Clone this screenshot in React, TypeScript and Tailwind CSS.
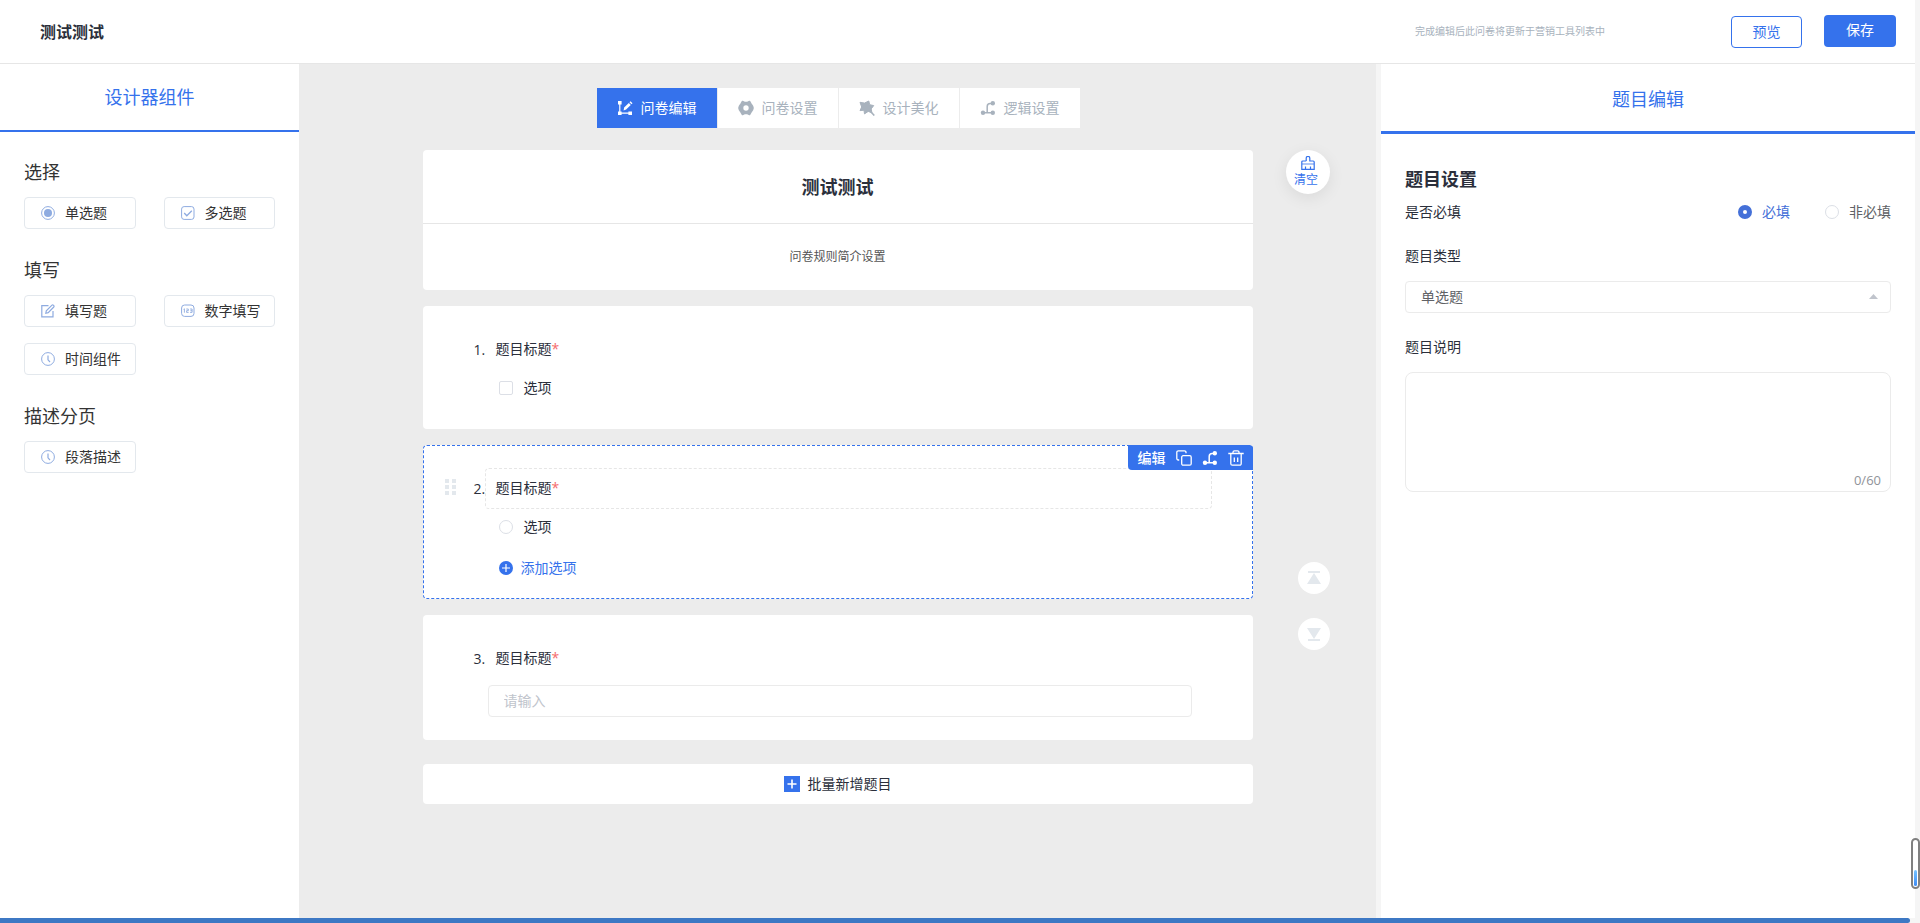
import React, { useState } from 'react';

const BranchIcon = ({ className = '' }) => (
  <svg className={className} width="16" height="16" viewBox="0 0 16 16" fill="currentColor">
    <circle cx="3" cy="12.8" r="2.2" />
    <circle cx="12.8" cy="12.8" r="2.2" />
    <circle cx="12.8" cy="3.2" r="2.2" />
    <path d="M3 12.8h10M7.2 12.8V6.4a3 3 0 0 1 3-3H13" fill="none" stroke="currentColor" strokeWidth="1.5" />
  </svg>
);

const EditTabIcon = () => (
  <svg width="16" height="16" viewBox="0 0 16 16" fill="currentColor">
    <path d="M1 1h3.600v3.600H1zM1 11.400h3.600V15H1zM11.400 11.400H15V15h-3.600z" />
    <path d="M2.800 3v10.200H13" fill="none" stroke="currentColor" strokeWidth="1.200" />
    <path d="M6.600 10.400l.5-2.800 4.700-4.700 2 2-4.700 4.700zM12.500 2.200l1-1 2 2-1 1z" />
  </svg>
);

const GearIcon = () => (
  <svg width="16" height="16" viewBox="0 0 16 16">
    <path
      d="M4.500 1.500l2 1h3l2-1 1.300 2.200L14.500 6.200 15 8l-.5 1.800-1.700 2.500-1.300 2.200-2-1h-3l-2 1-1.300-2.200L1.500 9.800 1 8l.5-1.800 1.700-2.500z"
      fill="currentColor"
      stroke="currentColor"
      strokeWidth="1.600"
      strokeLinejoin="round"
    />
    <circle cx="8" cy="8" r="2.700" fill="#fff" />
  </svg>
);

const WandIcon = () => (
  <svg width="16" height="16" viewBox="0 0 16 16">
    <path
      d="M9.800 1l.9 3.700 4 .9-2.500 3.300.7 3.900-3.700-1.400-3.700 2.500-.5-3.700L1 10.600 2.700 7 1 2.300l4.500.8z"
      fill="currentColor"
      stroke="currentColor"
      strokeWidth="1"
      strokeLinejoin="round"
    />
    <path d="M11.800 11.800l3.500 3.700" fill="none" stroke="currentColor" strokeWidth="1.600" />
  </svg>
);

const RadioIcon = () => (
  <svg width="14" height="14" viewBox="0 0 14 14">
    <circle cx="7" cy="7" r="6.400" fill="none" stroke="currentColor" />
    <circle cx="7" cy="7" r="4" fill="currentColor" />
  </svg>
);

const CheckIcon = () => (
  <svg width="14" height="14" viewBox="0 0 14 14" fill="none" stroke="currentColor">
    <rect x=".6" y=".6" width="12.400" height="12.800" rx="2.500" />
    <path d="M3.200 7l2.600 2.800 5-5" strokeWidth="1.300" />
  </svg>
);

const PenIcon = () => (
  <svg width="14" height="14" viewBox="0 0 14 14" fill="none" stroke="currentColor" strokeWidth="1.200">
    <path d="M7.500 1.700H.8v11.200H12V7" />
    <path d="M4.800 9.300l.5-2.400L11 1.200a.9.9 0 0 1 1.300 0l.5.500a.9.9 0 0 1 0 1.300L7.200 8.700z" />
  </svg>
);

const NumberIcon = () => (
  <svg width="14" height="14" viewBox="0 0 14 14" fill="none" stroke="currentColor">
    <rect x=".6" y="1" width="12.400" height="11.400" rx="3" />
    <path d="M2.600 5.300l.8-.5v3.900M5.300 5h2v1.700H5.600v1.700h2M9.100 5h2v3.400h-2M9.400 6.700h1.700" strokeWidth=".9" />
  </svg>
);

const ClockIcon = () => (
  <svg width="14" height="14" viewBox="0 0 14 14" fill="none" stroke="currentColor">
    <circle cx="7" cy="7" r="6.400" />
    <path d="M7 3.500V7.800l2 2.200" strokeWidth="1.200" />
  </svg>
);

const CopyIcon = () => (
  <svg width="16" height="16" viewBox="0 0 16 16" fill="none" stroke="currentColor" strokeWidth="1.300">
    <path d="M3.200 10H2.300A1.500 1.500 0 0 1 .8 8.500V2.300A1.500 1.500 0 0 1 2.300.8h6.200A1.500 1.500 0 0 1 10 2.300v.9" />
    <rect x="5.700" y="5.700" width="9.500" height="9.500" rx="1.500" />
  </svg>
);

const TrashIcon = () => (
  <svg width="16" height="16" viewBox="0 0 16 16" fill="none" stroke="currentColor" strokeWidth="1.300">
    <path d="M.3 3.500h15.400M5 3.300V2.200A1.400 1.400 0 0 1 6.400.8h3.200A1.400 1.400 0 0 1 11 2.200v1.100M2.800 3.500v10.200a1.500 1.500 0 0 0 1.500 1.500h7.400a1.500 1.500 0 0 0 1.500-1.500V3.500M6.300 7.500V12M9.700 7.500V12" />
  </svg>
);

const BrushIcon = () => (
  <svg width="14" height="14" viewBox="0 0 14 14" fill="none" stroke="currentColor" strokeWidth="1.200">
    <path d="M5.200 5V2.200a1.800 1.800 0 0 1 3.600 0V5h3.400a1 1 0 0 1 1 1v7.400H.8V6a1 1 0 0 1 1-1h3.400" />
    <path d="M1 8h12" strokeWidth="1.600" opacity=".5" />
    <path d="M4.500 13v-2.500M9.500 13v-2.500" />
  </svg>
);

const groups = [
  {
    title: '选择',
    items: [
      { name: '单选题', icon: RadioIcon },
      { name: '多选题', icon: CheckIcon },
    ],
  },
  {
    title: '填写',
    items: [
      { name: '填写题', icon: PenIcon },
      { name: '数字填写', icon: NumberIcon },
      { name: '时间组件', icon: ClockIcon },
    ],
  },
  {
    title: '描述分页',
    items: [{ name: '段落描述', icon: ClockIcon }],
  },
];

const tabs = [
  { name: '问卷编辑', icon: EditTabIcon },
  { name: '问卷设置', icon: GearIcon },
  { name: '设计美化', icon: WandIcon },
  { name: '逻辑设置', icon: BranchIcon },
];

const Header = () => (
  <header className="flex h-16 shrink-0 items-center border-b border-[#e6e6e6] pl-10 pr-[19px]">
    <h1 className="flex-1 text-base font-bold text-[#2b2f3b]">测试测试</h1>
    <p className="mr-[126px] text-[10px] text-[#a8b2bd]">完成编辑后此问卷将更新于营销工具列表中</p>
    <button className="mr-[22px] h-8 w-[71px] rounded border border-[#3572ec] text-sm text-[#3572ec]">预览</button>
    <button className="mb-0.5 h-8 w-[72px] rounded bg-[#3572ec] pb-0.5 text-sm text-white">保存</button>
  </header>
);

const ComponentPanel = () => (
  <aside className="w-[299px] shrink-0 bg-white">
    <h2 className="border-b-2 border-[#3572ec] text-center text-lg leading-[66px] text-[#3572ec]">设计器组件</h2>
    <div className="flex flex-col gap-7 px-6 pt-[27px]">
      {groups.map((group) => (
        <section key={group.title}>
          <h3 className="mb-3 text-lg leading-[26px] text-[#333]">{group.title}</h3>
          <div className="grid grid-cols-2 gap-x-7 gap-y-4">
            {group.items.map((item) => (
              <button
                key={item.name}
                className="flex h-8 items-center gap-2.5 rounded border border-[#e3e8ed] pl-4 text-sm text-[#333]"
              >
                <span className="text-[#8eabe0]">
                  <item.icon />
                </span>
                {item.name}
              </button>
            ))}
          </div>
        </section>
      ))}
    </div>
  </aside>
);

const QuestionCard = ({ index, active = false, className = '', children }: any) => (
  <section
    className={`relative flex rounded border bg-white pl-[21px] pr-10 pt-[22px] text-sm text-[#2b2f3b] ${
      active ? 'border-dashed border-[#3572ec]' : 'border-transparent'
    } ${className}`}
  >
    <div className="w-[29px] shrink-0 pt-[11px]">
      {active && (
        <div className="grid w-[11px] grid-cols-2 gap-x-[3px] gap-y-0.5">
          {[1, 2, 3, 4, 5, 6].map((dot) => (
            <span key={dot} className="size-1 bg-[#e3e8ed]" />
          ))}
        </div>
      )}
    </div>
    <div className="flex-1">
      <div className="flex items-center">
        <span className="w-[11px] whitespace-nowrap">{index}.</span>
        <h3
          className={`h-[41px] flex-1 rounded border px-2.5 leading-[38px] ${
            active ? 'border-dashed border-[#e6e6e6]' : 'border-transparent'
          }`}
        >
          题目标题<span className="text-[#f56c6c]">*</span>
        </h3>
      </div>
      {children}
    </div>
    {active && (
      <div className="absolute -right-px -top-px flex h-[25px] items-center gap-2.5 rounded-bl rounded-tr bg-[#3572ec] pl-2.5 pr-[9px] text-white">
        <button className="font-medium leading-5">编辑</button>
        <button aria-label="复制">
          <CopyIcon />
        </button>
        <button aria-label="逻辑">
          <BranchIcon />
        </button>
        <button aria-label="删除">
          <TrashIcon />
        </button>
      </div>
    )}
  </section>
);

const Designer = () => {
  const [tab, setTab] = useState('问卷编辑');

  return (
    <main className="grid flex-1 grid-cols-[1fr_830px_1fr] bg-[#ececec] pt-6">
      <div />
      <div>
        <nav className="flex justify-center gap-px pl-px">
          {tabs.map((item) => (
            <button
              key={item.name}
              onClick={() => setTab(item.name)}
              className={`flex h-10 w-[120px] items-center justify-center gap-2 text-sm ${
                tab === item.name ? 'bg-[#3572ec] text-white' : 'bg-white text-[#a8b2bd]'
              }`}
            >
              <item.icon />
              {item.name}
            </button>
          ))}
        </nav>

        <div className="mt-[22px] flex flex-col gap-4">
          <section className="rounded bg-white text-center">
            <h2 className="border-b border-[#e6e6e6] pt-0.5 text-lg font-bold leading-[71px] text-[#2b2f3b]">
              测试测试
            </h2>
            <p className="text-xs leading-[66px] text-[#555]">问卷规则简介设置</p>
          </section>

          <QuestionCard index={1} className="pb-[29px]">
            <label className="ml-[25px] mt-[7px] flex h-[22px] items-center gap-[11px]">
              <input type="checkbox" className="size-3.5 appearance-none rounded-xs border border-[#dcdfe6] bg-white" />
              选项
            </label>
          </QuestionCard>

          <QuestionCard index={2} active className="pb-[19px]">
            <label className="ml-[25px] mt-[7px] flex h-[22px] items-center gap-[11px]">
              <input type="radio" className="size-3.5 appearance-none rounded-full border border-[#dcdfe6] bg-white" />
              选项
            </label>
            <button className="ml-[25px] mt-[19px] flex h-[22px] items-center gap-2 text-[#3572ec]">
              <svg width="14" height="14" viewBox="0 0 14 14">
                <circle cx="7" cy="7" r="7" fill="currentColor" />
                <path d="M7 3v8M3 7h8" stroke="#fff" strokeWidth="1.200" />
              </svg>
              添加选项
            </button>
          </QuestionCard>

          <QuestionCard index={3} className="pb-[22px]">
            <div className="ml-3.5 mr-5 mt-1.5">
              <input
                type="text"
                aria-label="题目标题"
                placeholder="请输入"
                className="block h-8 w-full rounded border border-[#ebebeb] px-[15px] pb-px placeholder:text-[#c0c4cc] focus:outline-none"
              />
            </div>
          </QuestionCard>
        </div>

        <button className="mt-6 flex h-10 w-full items-center justify-center gap-2 rounded bg-white text-sm text-[#2b2f3b]">
          <svg width="16" height="16" viewBox="0 0 16 16">
            <rect width="16" height="16" fill="#3572ec" />
            <path d="M8 3.500v9M3.500 8h9" stroke="#fff" strokeWidth="1.600" />
          </svg>
          批量新增题目
        </button>
      </div>

      <div className="flex flex-col items-end pr-[46px] pt-[62px]">
        <button className="flex size-11 flex-col items-center rounded-full bg-white pt-1.5 text-xs text-[#3572ec] shadow-[0_4px_16px_rgba(0,0,0,0.08)]">
          <BrushIcon />
          <span className="pr-1 leading-5">清空</span>
        </button>
        <button
          aria-label="置顶"
          className="mt-[368px] flex size-8 items-center justify-center rounded-full bg-white text-[#e3e8ed]"
        >
          <svg width="14" height="14" viewBox="0 0 14 14" fill="currentColor">
            <path d="M1 0h12v2H1zM7 2l7 11H0z" />
          </svg>
        </button>
        <button
          aria-label="置底"
          className="mt-6 flex size-8 items-center justify-center rounded-full bg-white text-[#e3e8ed]"
        >
          <svg width="14" height="14" viewBox="0 0 14 14" fill="currentColor">
            <path d="M1 12h12v2H1zM7 12L0 1h14z" />
          </svg>
        </button>
      </div>
    </main>
  );
};

const radioClass =
  'size-3.5 appearance-none rounded-full border border-[#dcdfe6] bg-white checked:border-[5px] checked:border-[#4470d8]';

const SettingsPanel = () => {
  const [required, setRequired] = useState(true);
  const [desc, setDesc] = useState('');

  return (
    <aside className="w-[539px] shrink-0 border-l-[5px] border-[#f5f5f5] bg-white">
      <h2 className="border-b-3 border-[#3572ec] pt-[3px] text-center text-lg leading-16 text-[#3572ec]">题目编辑</h2>
      <div className="px-6 pt-8 text-sm text-[#2b2f3b]">
        <h3 className="text-lg font-bold leading-[26px]">题目设置</h3>
        <div className="mt-2 flex h-6 items-center">
          <span className="flex-1">是否必填</span>
          <label className="flex items-center gap-2.5 text-[#4470d8]">
            <input
              type="radio"
              name="required"
              className={radioClass}
              checked={required}
              onChange={() => setRequired(true)}
            />
            必填
          </label>
          <label className="ml-[35px] flex items-center gap-2.5 text-[#606266]">
            <input
              type="radio"
              name="required"
              className={radioClass}
              checked={!required}
              onChange={() => setRequired(false)}
            />
            非必填
          </label>
        </div>

        <label htmlFor="type" className="mt-[19px] block leading-[26px]">
          题目类型
        </label>
        <div className="relative mt-3">
          <select
            id="type"
            className="block h-8 w-full appearance-none rounded border border-[#ebebeb] px-[15px] text-[#606266] focus:outline-none"
          >
            <option>单选题</option>
            <option>多选题</option>
            <option>填写题</option>
          </select>
          <svg className="absolute right-[13px] top-[13px]" width="9" height="5" viewBox="0 0 9 5" fill="#c0c4cc">
            <path d="M4.500 0L9 5H0z" />
          </svg>
        </div>

        <label htmlFor="desc" className="mt-[21px] block leading-[26px]">
          题目说明
        </label>
        <div className="relative mt-3">
          <textarea
            id="desc"
            maxLength={60}
            value={desc}
            onChange={(e) => setDesc(e.target.value)}
            className="block h-[120px] w-full resize-none rounded-lg border border-[#ebebeb] px-[15px] py-1.5 focus:outline-none"
          />
          <span className="absolute bottom-1 right-2.5 text-[13px] leading-4 text-[#909399]">{desc.length}/60</span>
        </div>
      </div>
    </aside>
  );
};

const App = () => {
  return (
    <div className="flex min-h-screen flex-col bg-white font-['Open_Sans','Noto_Sans_CJK_SC',sans-serif]">
      <div className="flex flex-1">
        <div className="flex flex-1 flex-col">
          <Header />
          <div className="flex flex-1">
            <ComponentPanel />
            <Designer />
            <SettingsPanel />
          </div>
        </div>
        {/* vertical scrollbar track */}
        <div className="relative w-[5px] bg-[#f5f5f5]">
          <div className="absolute bottom-[29px] right-0 flex h-[51px] w-[9px] items-end rounded-full border-2 border-[#808080] bg-white px-px pb-px">
            <div className="h-4 w-full rounded-full bg-linear-to-b from-[#74c2ff] to-[#3f8cf5]" />
          </div>
        </div>
      </div>
      <div className="bg-[#f5f5f5] pr-2.5">
        <div className="h-[5px] rounded-r-full bg-[#3d78c4]" />
      </div>
    </div>
  );
};

export default App;
